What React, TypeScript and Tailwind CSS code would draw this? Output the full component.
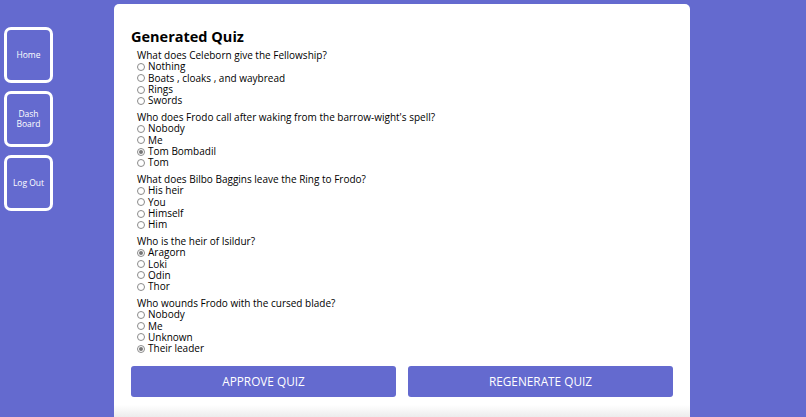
const quiz = [
  {
    question: "What does Celeborn give the Fellowship?",
    options: ["Nothing", "Boats , cloaks , and waybread", "Rings", "Swords"],
    selected: -1,
  },
  {
    question: "Who does Frodo call after waking from the barrow-wight's spell?",
    options: ["Nobody", "Me", "Tom Bombadil", "Tom"],
    selected: 2,
  },
  {
    question: "What does Bilbo Baggins leave the Ring to Frodo?",
    options: ["His heir", "You", "Himself", "Him"],
    selected: -1,
  },
  {
    question: "Who is the heir of Isildur?",
    options: ["Aragorn", "Loki", "Odin", "Thor"],
    selected: 0,
  },
  {
    question: "Who wounds Frodo with the cursed blade?",
    options: ["Nobody", "Me", "Unknown", "Their leader"],
    selected: 3,
  },
];

export default function App() {
  return (
    <div
      className="flex h-[417px] w-full overflow-hidden bg-[#646acf] text-black"
      style={{ fontFamily: '"Open Sans", "Liberation Sans", sans-serif' }}
    >
      <nav className="flex w-[114px] shrink-0 flex-col gap-[8px] pl-[4px] pt-[27px]">
        <NavButton label="Home" />
        <NavButton label={"Dash\nBoard"} />
        <NavButton label="Log Out" />
      </nav>

      <main className="mt-[4px] flex w-[576px] shrink-0 flex-col rounded-t-[5px] bg-white">
        <div className="px-[17px] pt-[22px]">
          <h1 className="text-[14.5px] font-bold leading-[22px]">Generated Quiz</h1>

          <div className="mt-[2px] flex flex-col gap-[5.5px] pl-[6px]">
            {quiz.map((q, qi) => (
              <div key={qi} className="text-[10px] leading-[11.3px]">
                <div>{q.question}</div>
                {q.options.map((opt, oi) => (
                  <div key={oi} className="flex items-center gap-[3px]">
                    <Radio checked={q.selected === oi} />
                    <span>{opt}</span>
                  </div>
                ))}
              </div>
            ))}
          </div>

          <div className="mt-[12px] flex gap-[12px]">
            <button className="h-[31px] flex-1 rounded-[3px] bg-[#646acf] text-[11.8px] uppercase text-white">
              Approve Quiz
            </button>
            <button className="h-[31px] flex-1 rounded-[3px] bg-[#646acf] text-[11.8px] uppercase text-white">
              Regenerate Quiz
            </button>
          </div>
        </div>
        <div className="mt-[8px] flex-1 bg-gradient-to-b from-white to-[#ececec]" />
      </main>
    </div>
  );
}

function NavButton({ label }: { label: string }) {
  return (
    <div className="flex h-[56px] w-[49px] items-center justify-center whitespace-pre-line rounded-[7px] border-[3px] border-white text-center text-[8.5px] leading-[10px] text-white">
      {label}
    </div>
  );
}

function Radio({ checked }: { checked: boolean }) {
  return (
    <span className="flex h-[8px] w-[8px] shrink-0 items-center justify-center rounded-full border border-[#8a8a8a] bg-white">
      {checked && <span className="h-[4px] w-[4px] rounded-full bg-[#777]" />}
    </span>
  );
}
